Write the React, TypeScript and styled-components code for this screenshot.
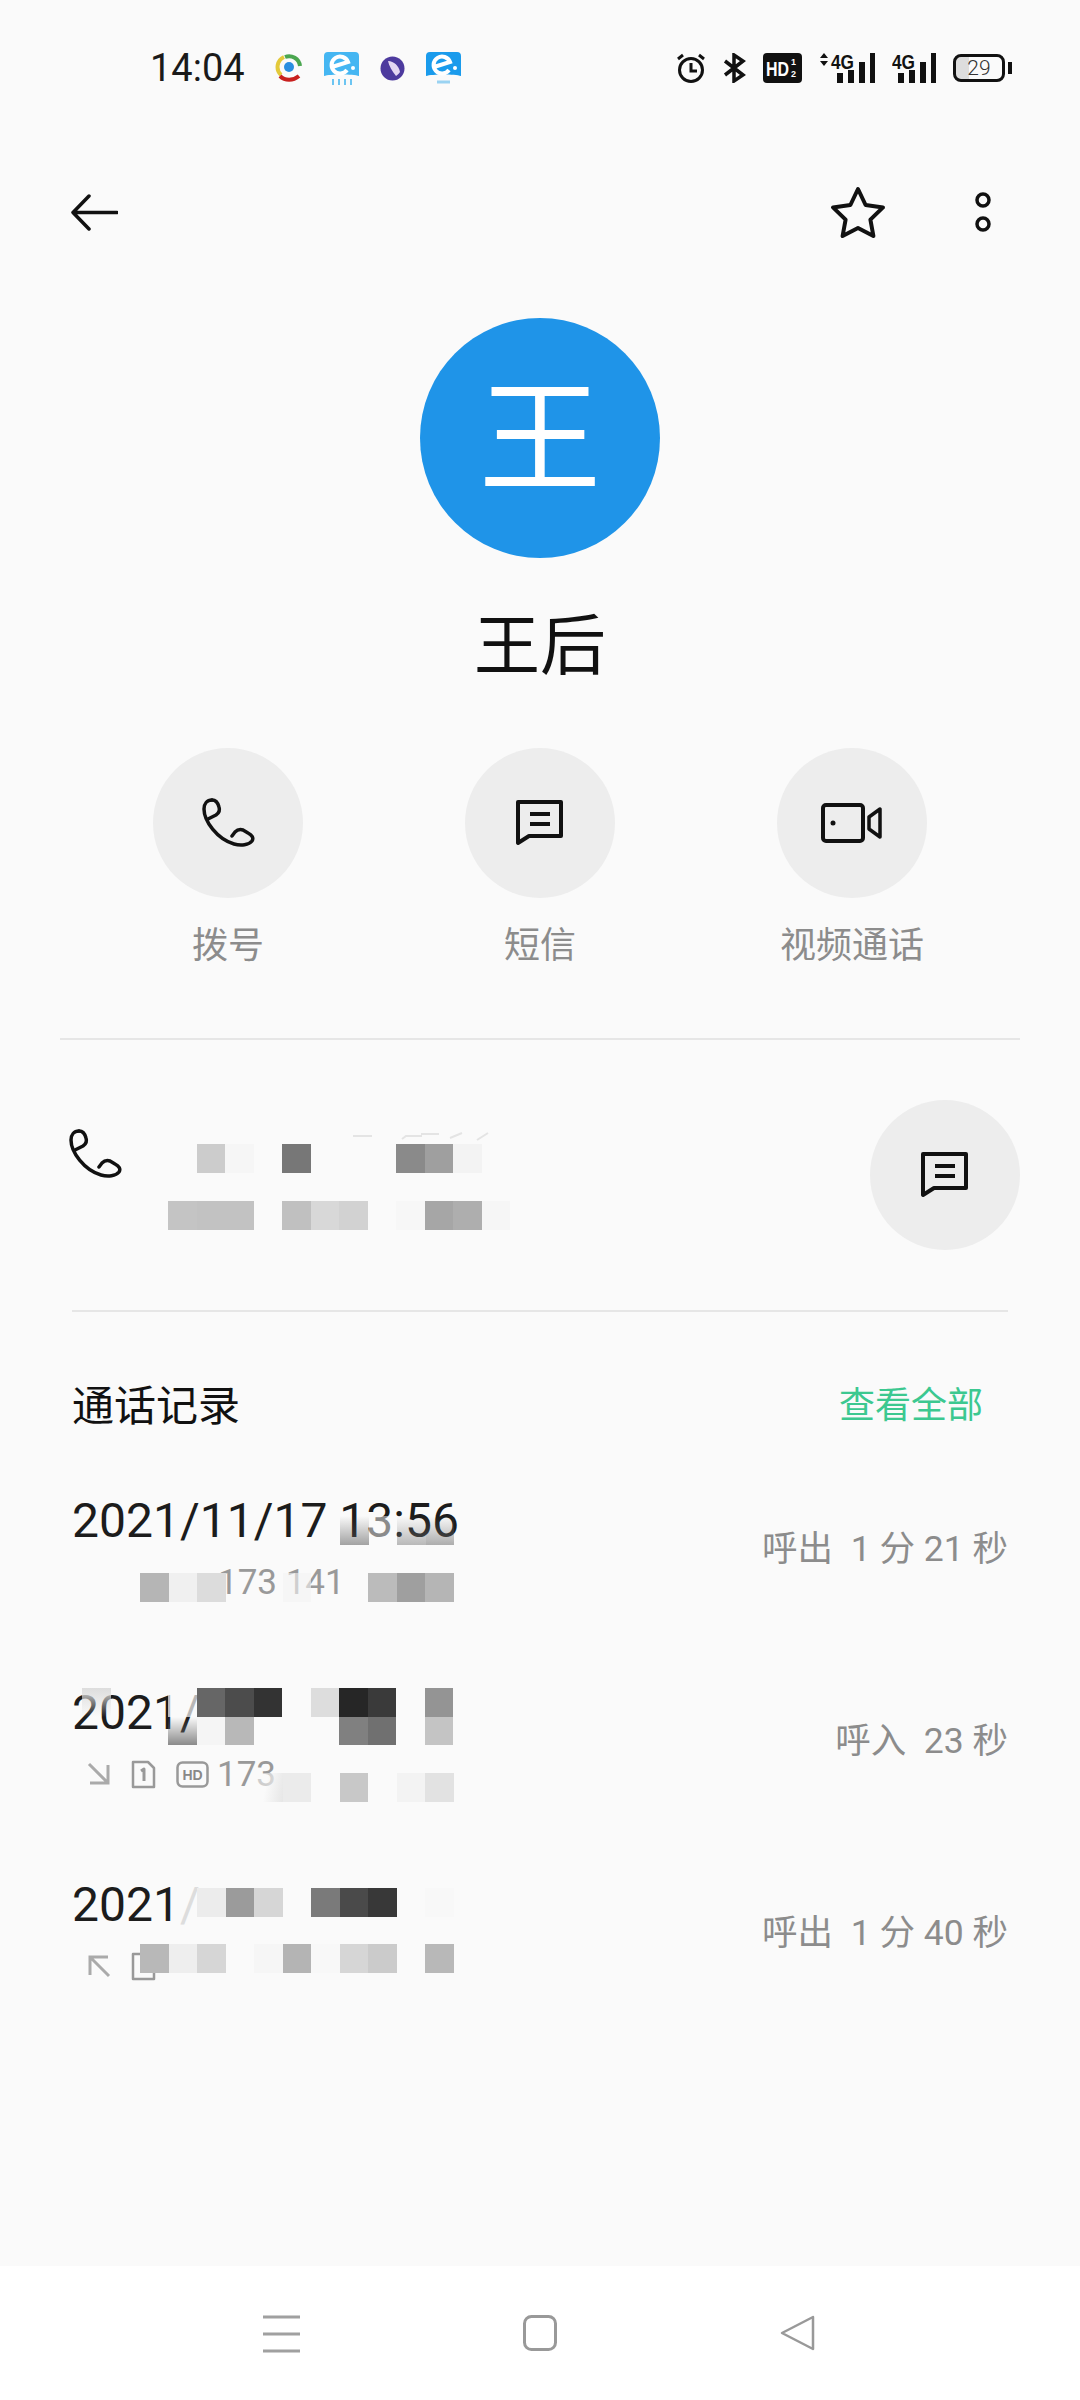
import React from 'react';
import styled, { createGlobalStyle } from 'styled-components';

const sans = `Roboto, 'Noto Sans CJK SC', sans-serif`;
const ink = '#111';
const gray = '#8c8c8c';

const GlobalStyle = createGlobalStyle`
  html, body {
    margin: 0;
    padding: 0;
    background: #fafafa;
  }
  * {
    box-sizing: border-box;
  }
`;

const Page = styled.div`
  width: 1080px;
  height: 2400px;
  display: flex;
  flex-direction: column;
  background: #fafafa;
  font-family: ${sans};
  color: ${ink};
  overflow: hidden;
`;
const Main = styled.main`
  flex: 1;
`;

const StatusBar = styled.header`
  height: 136px;
  display: flex;
  align-items: center;
  padding: 0 68px 0 150px;
`;
const Time = styled.span`
  width: 125px;
  font-size: 38px;
  color: #1a1a1a;
`;
const AppIcons = styled.div`
  display: flex;
  align-items: center;
  gap: 20px;
`;
const SystemIcons = styled.div`
  display: flex;
  align-items: center;
  gap: 17px;
  margin-left: auto;
`;
const SignalSvg = styled.svg`
  margin-top: -4px;
`;
const Battery = styled.div`
  position: relative;
  width: 52px;
  height: 28px;
  margin-right: 7px;
  border: 3px solid #111;
  border-radius: 8px;
  background: linear-gradient(90deg, #ddd 28%, transparent 28%);
  font-size: 21px;
  font-weight: 300;
  line-height: 22px;
  text-align: center;
  color: #333;
  &::after {
    content: '';
    position: absolute;
    right: -10px;
    top: 5px;
    width: 4px;
    height: 12px;
    background: #111;
  }
`;

const Toolbar = styled.div`
  height: 152px;
  display: flex;
  align-items: center;
  padding: 0 88px 0 70px;
`;
const ToolbarEnd = styled.div`
  margin-left: auto;
  display: flex;
  align-items: center;
  gap: 88px;
`;

const Avatar = styled.div`
  width: 240px;
  height: 240px;
  margin: 30px auto 0;
  padding-top: 4px;
  border-radius: 50%;
  background: #1f94e8;
  color: #fff;
  display: flex;
  align-items: center;
  justify-content: center;
  font-size: 122px;
  font-weight: 400;
  line-height: 1;
`;
const Name = styled.h1`
  margin: 49px 0 0;
  font-size: 66px;
  font-weight: 400;
  line-height: 80px;
  text-align: center;
`;

const Actions = styled.div`
  display: grid;
  grid-template-columns: repeat(3, 312px);
  justify-content: center;
  margin-top: 61px;
`;
const Action = styled.div`
  display: flex;
  flex-direction: column;
  align-items: center;
`;
const RoundButton = styled.div`
  width: 150px;
  height: 150px;
  flex: none;
  border-radius: 50%;
  background: #ededed;
  display: flex;
  align-items: center;
  justify-content: center;
`;
const ActionLabel = styled.span`
  margin-top: 23px;
  font-size: 36px;
  line-height: 50px;
  color: ${gray};
`;

const Divider = styled.hr<{ $inset: number }>`
  height: 2px;
  margin: 0 ${(p) => p.$inset}px;
  border: 0;
  background: #e6e6e6;
`;
const WideDivider = styled(Divider)`
  margin-top: 67px;
`;

const PhoneRow = styled.section`
  position: relative;
  height: 270px;
  padding: 60px 60px 60px 68px;
  display: flex;
  justify-content: space-between;
`;
const PhoneMark = styled.div`
  margin-top: 29px;
  height: 52px;
`;
const MosaicTraces = styled.svg`
  position: absolute;
  left: 350px;
  top: 92px;
`;

const HistoryHead = styled.div`
  height: 60px;
  margin-top: 60px;
  padding: 0 97px 0 72px;
  display: flex;
  align-items: center;
  justify-content: space-between;
`;
const HistoryTitle = styled.h2`
  margin: 0;
  font-size: 42px;
  font-weight: 400;
`;
const SeeAll = styled.span`
  font-size: 36px;
  color: #3cc890;
`;

const History = styled.div`
  margin-top: 27px;
  display: flex;
  flex-direction: column;
  gap: 8px;
`;
const CallRow = styled.div`
  position: relative;
  height: 184px;
  padding: 30px 72px 0;
  display: flex;
  justify-content: space-between;
`;
const CallDate = styled.div`
  font-size: 48px;
  line-height: 64px;
  white-space: nowrap;
  color: #1c1c1c;
`;
const FadedSlash = styled.span`
  color: #ddd;
`;
const CallSub = styled.div`
  height: 58px;
  padding-left: 15px;
  display: flex;
  align-items: center;
  gap: 20px;
`;
const HiddenIcons = styled.span`
  width: 123px;
  height: 1px;
`;
const CallNumber = styled.span`
  margin-left: -12px;
  font-size: 35px;
  color: #999;
`;
const CallLength = styled.div`
  align-self: center;
  margin-top: -42px;
  font-size: 35.5px;
  white-space: pre;
  color: ${gray};
`;

const Mosaic = styled.div<{ $left: number; $top: number; $cols: number }>`
  position: absolute;
  left: ${(p) => p.$left}px;
  top: ${(p) => p.$top}px;
  display: grid;
  grid-template-columns: repeat(${(p) => p.$cols}, 28.5px);
  grid-auto-rows: 28.5px;
`;
const Cell = styled.div<{ $fill: string }>`
  background: ${(p) => p.$fill || 'transparent'};
`;

const NavBar = styled.nav`
  height: 134px;
  background: #fff;
  display: grid;
  grid-template-columns: 263px 37px 223px 34px 223px 35px 265px;
  padding-top: 49px;
  & > svg:nth-child(1) {
    grid-column: 2;
  }
  & > svg:nth-child(2) {
    grid-column: 4;
  }
  & > svg:nth-child(3) {
    grid-column: 6;
  }
`;

function Blocks({ left, top, rows }: { left: number; top: number; rows: string[][] }) {
  return (
    <Mosaic $left={left} $top={top} $cols={rows[0].length}>
      {rows.flat().map((fill, i) => (
        <Cell key={i} $fill={fill} />
      ))}
    </Mosaic>
  );
}

const fade = (c: string) => `linear-gradient(180deg, transparent, ${c})`;

function PhoneGlyph() {
  return (
    <svg width="54" height="50" viewBox="0 0 54 50" fill="none" stroke="#111" strokeWidth="3.5" strokeLinecap="round" strokeLinejoin="round">
      <path d="M11 2C6 2 3 6 3 11c0 12 13 30 30 35 7 2 15 1 18-3 2-3 0-6-4-8l-5-3c-3-1-6 0-8 2l-3 4" />
      <path d="M11 2c4 0 6 3 7 7 1 3 0 6-3 8l-8 4" />
    </svg>
  );
}

function ChatGlyph() {
  return (
    <svg width="48" height="46" viewBox="0 0 48 46" fill="none" stroke="#111" strokeWidth="4">
      <path d="M2 2h43v34H13L2 43Z" strokeLinejoin="round" />
      <path d="M14 14h20M14 24h20" />
    </svg>
  );
}

function VideoGlyph() {
  return (
    <svg width="62" height="40" viewBox="0 0 62 40" fill="none" stroke="#111" strokeWidth="4" strokeLinejoin="round">
      <rect x="2" y="2" width="40" height="36" rx="3" />
      <path d="M59 6v28l-11-8v-12Z" strokeWidth="3.5" />
      <circle cx="12" cy="20" r="2.5" fill="#111" stroke="none" />
    </svg>
  );
}

function SimIcon() {
  return (
    <svg width="25" height="29" viewBox="0 0 25 29" fill="none" stroke="#999" strokeWidth="2.5" strokeLinejoin="round">
      <path d="M2 2h15l6 6v19H2Z" />
      <path d="M10 11l3-2v12" strokeWidth="3" />
    </svg>
  );
}

function HdIcon() {
  return (
    <svg width="33" height="27" viewBox="0 0 33 27" fill="none">
      <rect x="1.5" y="1.5" width="30" height="24" rx="5" stroke="#999" strokeWidth="2.5" />
      <text x="16.5" y="19" textAnchor="middle" fontFamily="Liberation Sans, sans-serif" fontSize="14" fontWeight="700" fill="#888">HD</text>
    </svg>
  );
}

function CallArrow({ incoming }: { incoming: boolean }) {
  return (
    <svg width="24" height="24" viewBox="0 0 24 24" fill="none" stroke="#aaa" strokeWidth="3">
      {incoming ? <path d="M2 2l19 19M3 21h18V3" /> : <path d="M22 22L3 3M21 3H3v18" />}
    </svg>
  );
}

function SignalIcon({ dual }: { dual: boolean }) {
  const x = dual ? 18 : 6;
  const w = dual ? 56 : 44;
  return (
    <SignalSvg width={w} height="34" viewBox={`0 -4 ${w} 34`} fill="#111">
      {dual && <path d="M5 0l4 5H1ZM5 13l4-5H1Z" />}
      <text x={dual ? 12 : 0} y="16" fontFamily="Liberation Sans, sans-serif" fontSize="21" fontWeight="700" textLength="23" lengthAdjust="spacingAndGlyphs">4G</text>
      <rect x={x} y="20" width="6" height="10" />
      <rect x={x + 11} y="17" width="6" height="13" />
      <rect x={x + 22} y="9" width="6" height="21" />
      <rect x={x + 33} y="0" width="5" height="30" />
    </SignalSvg>
  );
}

function BlueApp({ teeth }: { teeth: boolean }) {
  return (
    <svg width="37" height="35" viewBox="0 0 37 35" fill="none">
      <path d="M5 1h27a4 4 0 0 1 4 4v20c-6-2-29-2-35 0V5a4 4 0 0 1 4-4Z" fill={teeth ? '#45b6f2' : '#1a9bec'} />
      <path d="M9 16l16-5A8.5 8.5 0 1 0 24 19" stroke="#fff" strokeWidth="4" />
      <circle cx="30" cy="17" r="2" fill="#fff" />
      {teeth ? <path d="M10 28v6M16 28v6M22 28v6M28 28v6" stroke="#6cc5f2" strokeWidth="2" /> : <path d="M12 31h13" stroke="#9ad3f2" strokeWidth="3" />}
    </svg>
  );
}

export default function App() {
  return (
    <Page>
      <GlobalStyle />
      <Main>
        <StatusBar>
          <Time>14:04</Time>
          <AppIcons>
            <svg width="28" height="30" viewBox="0 0 28 30" fill="none" strokeWidth="4">
              <path d="M6 22A11 11 0 0 1 9 4" stroke="#e3c93a" />
              <path d="M10 4a11 11 0 0 1 15 9" stroke="#4aa64f" />
              <path d="M5 23c5 5 13 5 19 0" stroke="#c8201e" />
              <circle cx="14" cy="14" r="5" fill="#2a8ee0" stroke="none" />
            </svg>
            <BlueApp teeth />
            <svg width="25" height="25" viewBox="0 0 25 25">
              <circle cx="12.5" cy="12.5" r="12" fill="#4d3a9e" />
              <path d="M8 5c6 0 11 5 12 11-2 3-3 3-4 4C12 15 9 10 8 5Z" fill="#e4d6f2" />
            </svg>
            <BlueApp teeth={false} />
          </AppIcons>
          <SystemIcons>
            <svg width="30" height="30" viewBox="0 0 30 30" fill="none" stroke="#111" strokeWidth="3">
              <circle cx="15" cy="17" r="11.5" />
              <path d="M15 10v8h6M2 6l5-4M28 6l-5-4" />
            </svg>
            <svg width="23" height="30" viewBox="0 0 23 30" fill="none" stroke="#111" strokeWidth="3.5">
              <path d="M2 8l18 14-9 6V2l9 6L2 22" />
            </svg>
            <svg width="39" height="30" viewBox="0 0 39 30">
              <rect width="39" height="30" rx="4" fill="#111" />
              <text transform="translate(3 23) scale(.76 1)" fontFamily="Liberation Sans, sans-serif" fontSize="21" fontWeight="700" fill="#fff">HD</text>
              <text x="28" y="12" fontFamily="Liberation Sans, sans-serif" fontSize="9" fontWeight="700" fill="#fff">1</text>
              <text x="28" y="24" fontFamily="Liberation Sans, sans-serif" fontSize="9" fontWeight="700" fill="#fff">2</text>
            </svg>
            <SignalIcon dual />
            <SignalIcon dual={false} />
            <Battery>29</Battery>
          </SystemIcons>
        </StatusBar>

        <Toolbar>
          <svg width="48" height="37" viewBox="0 0 48 37" fill="none" stroke="#111" strokeWidth="3.5" strokeLinecap="round" strokeLinejoin="round">
            <path d="M47 18.5H3M19 2 3 18.5 19 35" />
          </svg>
          <ToolbarEnd>
            <svg width="56" height="53" viewBox="0 0 56 53" fill="none" stroke="#111" strokeWidth="4" strokeLinejoin="round">
              <path d="M28 3l7.6 16 17.4 2.4-12.6 12.2 3 16.4L28 42 12.6 50l3-16.4L3 21.4 20.4 19Z" />
            </svg>
            <svg width="18" height="40" viewBox="0 0 18 40" fill="none" stroke="#111" strokeWidth="3.5">
              <circle cx="9" cy="8" r="6" />
              <circle cx="9" cy="32" r="6" />
            </svg>
          </ToolbarEnd>
        </Toolbar>

        <Avatar>王</Avatar>
        <Name>王后</Name>

        <Actions>
          <Action>
            <RoundButton><PhoneGlyph /></RoundButton>
            <ActionLabel>拨号</ActionLabel>
          </Action>
          <Action>
            <RoundButton><ChatGlyph /></RoundButton>
            <ActionLabel>短信</ActionLabel>
          </Action>
          <Action>
            <RoundButton><VideoGlyph /></RoundButton>
            <ActionLabel>视频通话</ActionLabel>
          </Action>
        </Actions>

        <WideDivider $inset={60} />

        <PhoneRow>
          <PhoneMark><PhoneGlyph /></PhoneMark>
          <RoundButton><ChatGlyph /></RoundButton>
          <MosaicTraces width="140" height="12" viewBox="0 0 140 12" fill="none" stroke="#e4e4e4" strokeWidth="2">
            <path d="M3 4h19M52 7l4-3h16M71 2h18M100 6l12-5M127 8l11-7" />
          </MosaicTraces>
          <Blocks
            left={168}
            top={104}
            rows={[
              ['', '#ccc', '#f6f6f6', '', '#777', '', '', '', '#8a8a8a', '#9f9f9f', '#f3f3f3', '', '', ''],
              ['', '', '', '', '', '', '', '', '', '', '', '', '', ''],
              ['#c4c4c4', '#c2c2c2', '#c2c2c2', '', '#c0c0c0', '#d8d8d8', '#d2d2d2', '', '#f7f7f7', '#a6a6a6', '#aeaeae', '#f6f6f6', '', ''],
            ]}
          />
        </PhoneRow>

        <Divider $inset={72} />

        <HistoryHead>
          <HistoryTitle>通话记录</HistoryTitle>
          <SeeAll>查看全部</SeeAll>
        </HistoryHead>

        <History>
          <CallRow>
            <div>
              <CallDate>2021/11/17 13:56</CallDate>
              <CallSub>
                <HiddenIcons />
                <CallNumber>173 141</CallNumber>
              </CallSub>
            </div>
            <CallLength>呼出  1 分 21 秒</CallLength>
            <Blocks
              left={340}
              top={57}
              rows={[[fade('rgba(90,90,90,.55)'), 'rgba(250,250,250,.5)', fade('rgba(120,120,120,.5)'), fade('rgba(110,110,110,.55)')]]}
            />
            <Blocks
              left={140}
              top={114}
              rows={[['#b5b5b5', '#f0f0f0', '#dcdcdc', '', '', 'rgba(244,244,244,.6)', '', '', '#bbb', '#9f9f9f', '#b5b5b5']]}
            />
          </CallRow>
          <CallRow>
            <div>
              <CallDate>2021/</CallDate>
              <CallSub>
                <CallArrow incoming />
                <SimIcon />
                <HdIcon />
                <CallNumber>173</CallNumber>
              </CallSub>
            </div>
            <CallLength>呼入  23 秒</CallLength>
            <Blocks left={82} top={37} rows={[['linear-gradient(180deg, #ddd, transparent)']]} />
            <Blocks
              left={168}
              top={37}
              rows={[
                ['rgba(250,250,250,.7)', '#666', '#4c4c4c', '#333', '', '#ddd', '#262626', '#3a3a3a', '', '#949494'],
                [fade('rgba(110,110,110,.8)'), '#f5f5f5', '#b8b8b8', '', '', '', '#808080', '#707070', '', '#c4c4c4'],
              ]}
            />
            <Blocks
              left={254}
              top={122}
              rows={[['linear-gradient(100deg, rgba(250,250,250,.55) 40%, #e6e6e6)', '#ebebeb', '', '#c8c8c8', '', '#f3f3f3', '#e2e2e2']]}
            />
          </CallRow>
          <CallRow>
            <div>
              <CallDate>2021<FadedSlash>/</FadedSlash></CallDate>
              <CallSub>
                <CallArrow incoming={false} />
                <SimIcon />
              </CallSub>
            </div>
            <CallLength>呼出  1 分 40 秒</CallLength>
            <Blocks
              left={197}
              top={45}
              rows={[['#ececec', '#9b9b9b', '#d6d6d6', '', '#7a7a7a', '#4a4a4a', '#383838', '', '#f8f8f8']]}
            />
            <Blocks
              left={140}
              top={101}
              rows={[['#b8b8b8', '#eee', '#d6d6d6', '', '#f6f6f6', '#b4b4b4', '#f8f8f8', '#d6d6d6', '#cbcbcb', '', '#b8b8b8']]}
            />
          </CallRow>
        </History>
      </Main>

      <NavBar>
        <svg width="37" height="38" viewBox="0 0 37 38" stroke="#a0a0a0" strokeWidth="3">
          <path d="M0 2h37M0 19h37M0 36h37" />
        </svg>
        <svg width="34" height="36" viewBox="0 0 34 36" fill="none" stroke="#999" strokeWidth="3">
          <rect x="1.5" y="1.5" width="31" height="33" rx="7" />
        </svg>
        <svg width="35" height="36" viewBox="0 0 35 36" fill="none" stroke="#999" strokeWidth="2.5" strokeLinejoin="round">
          <path d="M33 2 2 18l31 16Z" />
        </svg>
      </NavBar>
    </Page>
  );
}
